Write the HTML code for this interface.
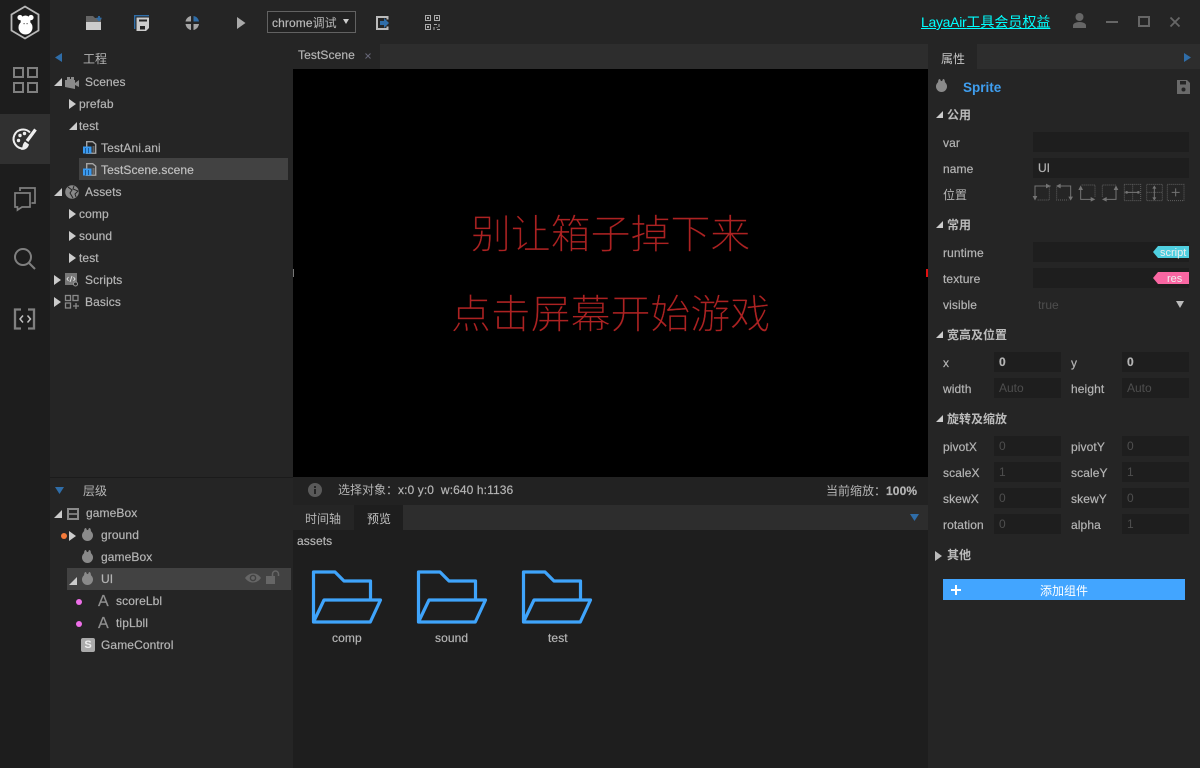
<!DOCTYPE html>
<html><head><meta charset="utf-8"><style>
*{box-sizing:border-box}
html,body{margin:0;padding:0;width:1200px;height:768px;overflow:hidden;background:#252525}
body{position:relative;font:12px/22px "Liberation Sans","Noto Sans CJK SC",sans-serif;color:#b4b4b4}
.b{position:absolute}
.t{position:absolute;white-space:nowrap;height:22px;line-height:22px;letter-spacing:.1px;-webkit-text-stroke:.2px currentColor}
.r{margin-top:1px}
.c{-webkit-text-stroke:0;letter-spacing:0}
.h{position:absolute;white-space:nowrap;height:22px;line-height:22px;font-weight:bold;color:#bbb}
.i{position:absolute;background:#1e1e1e;height:20px;line-height:21px;padding-left:5px;color:#b4b4b4;-webkit-text-stroke:.2px currentColor}
.i.d{color:#4e4e4e;-webkit-text-stroke:0}
svg{position:absolute;overflow:visible}
.ar{position:absolute;width:0;height:0;border-top:5px solid transparent;border-bottom:5px solid transparent;border-left:7px solid #ccc}
.ad{position:absolute;width:0;height:0;border-bottom:8px solid #ccc;border-left:8px solid transparent}
.big{position:absolute;left:293px;width:635px;height:52px;text-align:center;font:40px/52px "Noto Sans CJK SC",sans-serif;font-weight:300;color:#ac2222;-webkit-text-stroke:.3px #000;letter-spacing:-.1px}
</style></head><body>
<div class="b" style="left:0;top:0;width:50px;height:768px;background:#1d1d1d"></div>
<div class="b" style="left:0;top:114px;width:50px;height:50px;background:#303030"></div>

<svg style="left:0;top:0" width="50" height="44"><polygon points="25,6.500 38.500,14.500 38.500,30.500 25,38.500 11.500,30.500 11.500,14.500" fill="none" stroke="#b8b8b8" stroke-width="1.800"/><circle cx="20" cy="17.500" r="2.600" fill="#fff"/><circle cx="31" cy="17.500" r="2.600" fill="#fff"/><circle cx="25.500" cy="20.500" r="5" fill="#fff"/><circle cx="25.500" cy="27.500" r="7" fill="#fff"/><rect x="23.500" y="23" width="1.200" height="1.200" fill="#666"/><rect x="26.500" y="23" width="1.200" height="1.200" fill="#666"/></svg>

<svg style="left:0;top:50px" width="50" height="290" fill="none">
<g stroke="#7f7f7f" stroke-width="2"><rect x="14" y="18" width="9" height="9"/><rect x="28" y="18" width="9" height="9"/><rect x="14" y="33" width="9" height="9"/><rect x="28" y="33" width="9" height="9"/></g>
<path d="M30 82.500A9.500 9.500 0 1 0 23 98.500" stroke="#eee" stroke-width="2"/>
<circle cx="20" cy="85.500" r="1.700" fill="#eee"/><circle cx="24.500" cy="83.500" r="1.700" fill="#eee"/><circle cx="18.500" cy="90.500" r="1.700" fill="#eee"/>
<path d="M35.500 79.500L27 91" stroke="#eee" stroke-width="3.200"/>
<path d="M25 91.500l4 3c-1 4-4 5.500-8 5.500 2-2 1-6 4-8.500z" fill="#eee"/>
<path d="M20 141v-3h15v15h-3.500" stroke="#7f7f7f" stroke-width="1.700"/><path d="M15 143h15v14h-8l-4.500 3v-3H15z" stroke="#7f7f7f" stroke-width="1.700"/>
<circle cx="23" cy="207" r="8" stroke="#7f7f7f" stroke-width="2"/><path d="M29 213l6 6" stroke="#7f7f7f" stroke-width="2"/>
<path d="M21 259.500h-6v19h6M28 259.500h6v19h-6" stroke="#808080" stroke-width="2.300"/><path d="M23 265.500l-3 3.500 3 3.500M27.500 265.500l3 3.500-3 3.500" stroke="#c0c0c0" stroke-width="1.500"/>
</svg>

<svg style="left:86px;top:16px" width="16" height="15"><path d="M0 0h7l2 2h6v5H0z" fill="#666"/><rect y="6" width="15" height="8" fill="#ccc"/><path d="M10.500 2.500h5M13 0v5" stroke="#2f6da8" stroke-width="1.800"/></svg>
<svg style="left:134px;top:15px" width="16" height="17"><path d="M.7 14V.7H15" fill="none" stroke="#2f6da8" stroke-width="1.400"/><path d="M2.500 2.500H15V13l-3 3H2.500z" fill="#ccc"/><rect x="5" y="4.500" width="8" height="2" fill="#252525"/><rect x="6" y="11" width="5" height="3.500" fill="#252525"/></svg>
<svg style="left:185px;top:16px" width="15" height="14"><path d="M6 0v5.500H0.500C1 3 3 .5 6 0zM.5 8H6v6C3 13.500 1 11 .5 8zM8.500 14V8H14c-.5 3-2.500 5.500-5.500 6z" fill="#a5a5a5"/><path d="M8.500 0c3 .5 5 2.500 5.500 5.500H8.500z" fill="#2f6da8"/></svg>
<svg style="left:237px;top:17px" width="9" height="12"><path d="M0 0l8.500 6L0 12z" fill="#aaa"/></svg>
<div class="b" style="left:267px;top:11px;width:89px;height:22px;border:1px solid #626262;background:#222"></div>
<div class="t" style="left:272px;top:12px;color:#b8b8b8">chrome<span class="c">调试</span></div>
<svg style="left:343px;top:19px" width="6" height="5"><path d="M0 0h6L3 5z" fill="#ccc"/></svg>
<svg style="left:376px;top:16px" width="13" height="14"><path d="M11.500 3.500V1H1v12h10.500v-2.500" fill="none" stroke="#bbb" stroke-width="2"/><path d="M4 5h4V2l5 5-5 5V9H4z" fill="#2f6da8"/></svg>
<svg style="left:425px;top:15px" width="15" height="15" fill="none" stroke="#aaa"><rect x=".5" y=".5" width="5" height="5"/><rect x="9.500" y=".5" width="5" height="5"/><rect x=".5" y="9.500" width="5" height="5"/><path d="M2.500 2.500h1v1h-1zM11.500 2.500h1v1h-1zM2.500 11.500h1v1h-1zM9 9.500h3M14 9v3M9 12v3M11.500 12.500h1M12 14.500h3"/></svg>

<div class="t c" style="left:921px;top:11px;font-size:14px;color:#0ff;text-decoration:underline"><span style="letter-spacing:-.3px">LayaAir</span>工具会员权益</div>
<svg style="left:1073px;top:13px" width="14" height="15"><circle cx="6.500" cy="4" r="4" fill="#666"/><path d="M0 15v-2.500C0 10.500 3 9 6.500 9S13 10.500 13 12.500V15z" fill="#666"/></svg>
<div class="b" style="left:1106px;top:21px;width:12px;height:2px;background:#666"></div>
<div class="b" style="left:1138px;top:16px;width:12px;height:11px;border:2px solid #666"></div>
<svg style="left:1170px;top:17px" width="10" height="10"><path d="M.5.500l9 9M9.500.500l-9 9" stroke="#666" stroke-width="1.800"/></svg>

<!-- left panel -->
<svg style="left:55px;top:53px" width="8" height="10"><path d="M7 0v9L0 4.500z" fill="#2f6da8"/></svg>
<div class="t c" style="left:83px;top:48px">工程</div>
<div class="b" style="left:79px;top:158px;width:209px;height:22px;background:#424242"></div>

<div class="ad" style="left:54px;top:78px"></div>
<svg style="left:65px;top:77px" width="15" height="10"><path d="M0 10V3h2V0h3v2h1V0h3v3h1v3l4-3v7l-4-2v4z" fill="#8a8a8a"/></svg>
<div class="t r" style="left:85px;top:70px">Scenes</div>
<div class="ar" style="left:69px;top:99px"></div><div class="t r" style="left:79px;top:92px">prefab</div>
<div class="ad" style="left:69px;top:122px"></div><div class="t r" style="left:79px;top:114px">test</div>
<svg style="left:83px;top:141px" width="14" height="13"><path d="M3.700.7h6l3 2.500v9H3.700z" fill="#252525" stroke="#a5a5a5" stroke-width="1.400"/><path d="M9.500 6h2M9.500 8h2M9.500 10h2" stroke="#999"/><rect y="5.500" width="8.500" height="7" fill="#3a9af0"/><path d="M2.500 7v5M5.500 7v5" stroke="#1a5a98"/></svg>
<div class="t r" style="left:101px;top:136px">TestAni.ani</div>
<svg style="left:83px;top:163px" width="14" height="13"><path d="M3.700.7h6l3 2.500v9H3.700z" fill="#424242" stroke="#a5a5a5" stroke-width="1.400"/><path d="M9.500 6h2M9.500 8h2M9.500 10h2" stroke="#999"/><rect y="5.500" width="8.500" height="7" fill="#3a9af0"/><path d="M2.500 7v5M5.500 7v5" stroke="#1a5a98"/></svg>
<div class="t r" style="left:101px;top:158px;color:#c0c0c0">TestScene.scene</div>
<div class="ad" style="left:54px;top:188px"></div>
<svg style="left:65px;top:185px" width="14" height="14"><circle cx="7" cy="7" r="6.800" fill="#888"/><path d="M3 2l4 3-2 3 3 5M9 1l-1 3 5 2-3 3 1 3" stroke="#252525" fill="none"/></svg>
<div class="t r" style="left:85px;top:180px">Assets</div>
<div class="ar" style="left:69px;top:209px"></div><div class="t r" style="left:79px;top:202px">comp</div>
<div class="ar" style="left:69px;top:231px"></div><div class="t r" style="left:79px;top:224px">sound</div>
<div class="ar" style="left:69px;top:253px"></div><div class="t r" style="left:79px;top:246px">test</div>
<div class="ar" style="left:54px;top:275px"></div>
<svg style="left:65px;top:273px" width="13" height="14"><rect width="12" height="12" fill="#777"/><path d="M3.500 4L2 6l1.500 2M8.500 4L10 6 8.500 8M7 3L5 9" stroke="#ddd" fill="none"/><circle cx="10.500" cy="11" r="2" fill="#252525" stroke="#999"/></svg>
<div class="t r" style="left:85px;top:268px">Scripts</div>
<div class="ar" style="left:54px;top:297px"></div>
<svg style="left:65px;top:295px" width="14" height="14" fill="none" stroke="#8a8a8a" stroke-width="1.300"><rect x=".5" y=".5" width="5" height="5"/><rect x="8" y=".5" width="5" height="5"/><rect x=".5" y="8" width="5" height="5"/><path d="M11 8v6M8 11h6"/></svg>
<div class="t r" style="left:85px;top:290px">Basics</div>

<div class="b" style="left:50px;top:477px;width:243px;height:1px;background:#1b1b1b"></div>
<svg style="left:55px;top:487px" width="10" height="7"><path d="M0 0h9L4.500 7z" fill="#2f6da8"/></svg>
<div class="t c" style="left:83px;top:480px">层级</div>
<div class="b" style="left:67px;top:568px;width:224px;height:22px;background:#424242"></div>
<div class="ad" style="left:54px;top:510px"></div>
<svg style="left:67px;top:508px" width="12" height="12"><rect x="1" y="1" width="10" height="10" fill="none" stroke="#8a8a8a" stroke-width="2"/><path d="M1 6h10" stroke="#8a8a8a" stroke-width="1.600"/></svg>
<div class="t" style="left:86px;top:502px">gameBox</div>
<div class="b" style="left:61px;top:533px;width:6px;height:6px;border-radius:50%;background:#f47a3a"></div>
<div class="ar" style="left:69px;top:531px"></div>
<svg style="left:82px;top:528px" width="12" height="13"><ellipse cx="3.500" cy="3" rx="1.400" ry="3" fill="#8a8a8a"/><ellipse cx="7.500" cy="3" rx="1.400" ry="3" fill="#8a8a8a"/><circle cx="5.500" cy="7.500" r="5.500" fill="#8a8a8a"/></svg>
<div class="t" style="left:101px;top:524px">ground</div>
<svg style="left:82px;top:550px" width="12" height="13"><ellipse cx="3.500" cy="3" rx="1.400" ry="3" fill="#8a8a8a"/><ellipse cx="7.500" cy="3" rx="1.400" ry="3" fill="#8a8a8a"/><circle cx="5.500" cy="7.500" r="5.500" fill="#8a8a8a"/></svg>
<div class="t" style="left:101px;top:546px">gameBox</div>
<div class="ad" style="left:69px;top:577px"></div>
<svg style="left:82px;top:572px" width="12" height="13"><ellipse cx="3.500" cy="3" rx="1.400" ry="3" fill="#8a8a8a"/><ellipse cx="7.500" cy="3" rx="1.400" ry="3" fill="#8a8a8a"/><circle cx="5.500" cy="7.500" r="5.500" fill="#8a8a8a"/></svg>
<div class="t" style="left:101px;top:568px">UI</div>
<svg style="left:245px;top:573px" width="16" height="10"><path d="M0 5C3 1 6 .5 8 .5s5 .5 8 4.500c-3 4-6 4.500-8 4.500S3 9 0 5z" fill="#666"/><circle cx="8" cy="5" r="3.300" fill="#424242"/><circle cx="8" cy="5" r="1.900" fill="#666"/></svg>
<svg style="left:266px;top:571px" width="15" height="13"><rect y="5" width="9" height="8" fill="#666"/><path d="M6.500 5V3a3 3 0 0 1 6 0v2" fill="none" stroke="#666" stroke-width="1.500"/></svg>
<div class="b" style="left:76px;top:599px;width:6px;height:6px;border-radius:50%;background:#ee6fe8"></div>
<div class="t" style="left:98px;top:591px;font-size:16px;color:#909090">A</div>
<div class="t" style="left:116px;top:590px">scoreLbl</div>
<div class="b" style="left:76px;top:621px;width:6px;height:6px;border-radius:50%;background:#ee6fe8"></div>
<div class="t" style="left:98px;top:613px;font-size:16px;color:#909090">A</div>
<div class="t" style="left:116px;top:612px">tipLbll</div>
<div class="b" style="left:81px;top:638px;width:14px;height:14px;border-radius:2px;background:#aaa;color:#eee;font-size:11px;font-weight:bold;line-height:14px;text-align:center">S</div>
<div class="t" style="left:101px;top:634px">GameControl</div>

<!-- centre -->
<div class="b" style="left:293px;top:44px;width:635px;height:25px;background:#2d2d2d"></div>
<div class="b" style="left:293px;top:44px;width:87px;height:25px;background:#252525"></div>
<div class="t" style="left:298px;top:44px">TestScene</div>
<svg style="left:365px;top:53px" width="6" height="6"><path d="M.5.500l5 5M5.500.500l-5 5" stroke="#667" stroke-width="1"/></svg>
<div class="b" style="left:293px;top:69px;width:635px;height:408px;background:#000"></div>
<div class="b" style="left:293px;top:269px;width:1px;height:8px;background:#777"></div>
<div class="b" style="left:926px;top:269px;width:2px;height:8px;background:#e01010"></div>
<div class="big" style="top:205px">别让箱子掉下来</div>
<div class="big" style="top:285px">点击屏幕开始游戏</div>

<div class="b" style="left:293px;top:477px;width:635px;height:28px;background:#222"></div>
<svg style="left:308px;top:483px" width="14" height="14"><circle cx="7" cy="7" r="7" fill="#5a5a5a"/><rect x="6" y="6" width="2" height="5" fill="#252525"/><rect x="6" y="3" width="2" height="2" fill="#252525"/></svg>
<div class="t" style="left:338px;top:479px"><span class="c">选择对象：</span>x:0 y:0&nbsp; w:640 h:1136</div>
<div class="t" style="left:826px;top:480px"><span class="c">当前缩放：</span><b>100%</b></div>

<div class="b" style="left:293px;top:505px;width:635px;height:25px;background:#2d2d2d"></div>
<div class="b" style="left:293px;top:505px;width:61px;height:25px;background:#252525"></div>
<div class="b" style="left:354px;top:505px;width:49px;height:25px;background:#1e1e1e"></div>
<div class="t c" style="left:305px;top:508px">时间轴</div>
<div class="t c" style="left:367px;top:508px;color:#c4c4c4">预览</div>
<svg style="left:910px;top:514px" width="9" height="7"><path d="M0 0h9L4.500 7z" fill="#2f6da8"/></svg>
<div class="b" style="left:293px;top:530px;width:635px;height:238px;background:#1e1e1e"></div>
<div class="t" style="left:297px;top:530px">assets</div>

<svg style="left:312px;top:570px" width="70" height="56" fill="none" stroke="#3fa4fb" stroke-width="3.200" stroke-linejoin="round" stroke-linecap="round"><path d="M1.500 52V2H23l9 9h26.500v19M1.500 52L12 30h56.500L58.300 52z"/></svg>
<svg style="left:417px;top:570px" width="70" height="56" fill="none" stroke="#3fa4fb" stroke-width="3.200" stroke-linejoin="round" stroke-linecap="round"><path d="M1.500 52V2H23l9 9h26.500v19M1.500 52L12 30h56.500L58.300 52z"/></svg>
<svg style="left:522px;top:570px" width="70" height="56" fill="none" stroke="#3fa4fb" stroke-width="3.200" stroke-linejoin="round" stroke-linecap="round"><path d="M1.500 52V2H23l9 9h26.500v19M1.500 52L12 30h56.500L58.300 52z"/></svg>
<div class="t" style="left:332px;top:627px">comp</div>
<div class="t" style="left:435px;top:627px">sound</div>
<div class="t" style="left:548px;top:627px">test</div>

<!-- right -->
<div class="b" style="left:928px;top:44px;width:272px;height:724px;background:#252525"></div>
<div class="b" style="left:977px;top:44px;width:223px;height:25px;background:#2d2d2d"></div>
<div class="t c" style="left:941px;top:48px;color:#c4c4c4">属性</div>
<svg style="left:1184px;top:53px" width="8" height="10"><path d="M0 0v9l7-4.500z" fill="#2f6da8"/></svg>
<svg style="left:936px;top:79px" width="12" height="13"><ellipse cx="3.500" cy="3" rx="1.400" ry="3" fill="#8a8a8a"/><ellipse cx="7.500" cy="3" rx="1.400" ry="3" fill="#8a8a8a"/><circle cx="5.500" cy="7.500" r="5.500" fill="#8a8a8a"/></svg>
<div class="t c" style="left:963px;top:77px;font-size:13.500px;font-weight:bold;color:#3f9eef">Sprite</div>
<svg style="left:1177px;top:80px" width="13" height="14"><path d="M0 0h10l3 3v11H0z" fill="#6a6a6a"/><rect x="3" y="1" width="6" height="3.500" fill="#252525"/><circle cx="6.500" cy="9.500" r="2" fill="#252525"/></svg>

<div class="ad" style="left:936px;top:111px;border-bottom-width:7px;border-left-width:7px"></div>
<div class="h" style="left:947px;top:104px">公用</div>
<div class="t" style="left:943px;top:132px">var</div><div class="i" style="left:1033px;top:132px;width:156px"></div>
<div class="t" style="left:943px;top:158px">name</div><div class="i" style="left:1033px;top:158px;width:156px">UI</div>
<div class="t c" style="left:943px;top:184px">位置</div>
<svg style="left:1030px;top:180px" width="165" height="30" viewBox="0 0 495 90" fill="none">
<g stroke="#606060" stroke-width="3" stroke-dasharray="3 3">
<path d="M58 20V60H20M80 22V60H115M155 15H195V50M217 50V15H258"/>
<rect x="283" y="13" width="49" height="49"/><path d="M308 13V62M283 37H332"/>
<rect x="350" y="13" width="47" height="49"/><path d="M350 37H397"/>
<rect x="412" y="13" width="50" height="49"/>
</g>
<g stroke="#747474" stroke-width="3">
<path d="M62 18H15V50M85 18H122V55M152 25V58H190M258 25V58H222M288 37H328M373 20V58M425 37H449M437 25V49"/>
</g>
<g fill="#747474">
<path d="M48 11L62 18 48 25zM8 48H22L15 62zM92 11L78 18 92 25zM115 50H129L122 62zM145 30L152 16 159 30zM182 51L196 58 182 65zM251 30L258 16 265 30zM230 51L216 58 230 65z"/>
<circle cx="290" cy="37" r="4"/><circle cx="325" cy="37" r="4"/>
<path d="M367 26L373 16 379 26zM367 52L373 62 379 52z"/>
</g>
</svg>

<div class="ad" style="left:936px;top:221px;border-bottom-width:7px;border-left-width:7px"></div>
<div class="h" style="left:947px;top:214px">常用</div>
<div class="t" style="left:943px;top:242px">runtime</div><div class="i" style="left:1033px;top:242px;width:156px"></div>
<svg style="left:1153px;top:246px" width="36" height="12"><path d="M0 6l5-6h31v12H5z" fill="#4fcfe0"/></svg>
<div class="t c" style="left:1160px;top:242px;font-size:11px;color:#eee">script</div>
<div class="t" style="left:943px;top:268px">texture</div><div class="i" style="left:1033px;top:268px;width:156px"></div>
<svg style="left:1153px;top:272px" width="36" height="12"><path d="M0 6l5-6h31v12H5z" fill="#f966a2"/></svg>
<div class="t c" style="left:1167px;top:268px;font-size:11px;color:#eee">res</div>
<div class="t" style="left:943px;top:294px">visible</div>
<div class="t c" style="left:1038px;top:294px;color:#4e4e4e">true</div>
<svg style="left:1176px;top:301px" width="8" height="7"><path d="M0 0h8L4 7z" fill="#bbb"/></svg>

<div class="ad" style="left:936px;top:331px;border-bottom-width:7px;border-left-width:7px"></div>
<div class="h" style="left:947px;top:324px">宽高及位置</div>
<div class="t" style="left:943px;top:352px">x</div><div class="i" style="left:994px;top:352px;width:67px;font-weight:bold">0</div>
<div class="t" style="left:1071px;top:352px">y</div><div class="i" style="left:1122px;top:352px;width:67px;font-weight:bold">0</div>
<div class="t" style="left:943px;top:378px">width</div><div class="i d" style="left:994px;top:378px;width:67px">Auto</div>
<div class="t" style="left:1071px;top:378px">height</div><div class="i d" style="left:1122px;top:378px;width:67px">Auto</div>

<div class="ad" style="left:936px;top:415px;border-bottom-width:7px;border-left-width:7px"></div>
<div class="h" style="left:947px;top:408px">旋转及缩放</div>
<div class="t" style="left:943px;top:436px">pivotX</div><div class="i d" style="left:994px;top:436px;width:67px">0</div>
<div class="t" style="left:1071px;top:436px">pivotY</div><div class="i d" style="left:1122px;top:436px;width:67px">0</div>
<div class="t" style="left:943px;top:462px">scaleX</div><div class="i d" style="left:994px;top:462px;width:67px">1</div>
<div class="t" style="left:1071px;top:462px">scaleY</div><div class="i d" style="left:1122px;top:462px;width:67px">1</div>
<div class="t" style="left:943px;top:488px">skewX</div><div class="i d" style="left:994px;top:488px;width:67px">0</div>
<div class="t" style="left:1071px;top:488px">skewY</div><div class="i d" style="left:1122px;top:488px;width:67px">0</div>
<div class="t" style="left:943px;top:514px">rotation</div><div class="i d" style="left:994px;top:514px;width:67px">0</div>
<div class="t" style="left:1071px;top:514px">alpha</div><div class="i d" style="left:1122px;top:514px;width:67px">1</div>

<div class="ar" style="left:935px;top:551px;border-left-color:#bbb"></div>
<div class="h" style="left:947px;top:544px">其他</div>
<div class="b" style="left:943px;top:579px;width:242px;height:21px;background:#42a5ff;color:#fff;text-align:center;line-height:24px">添加组件</div>
<svg style="left:951px;top:585px" width="10" height="10"><path d="M5 0v10M0 5h10" stroke="#fff" stroke-width="2"/></svg>
</body></html>
